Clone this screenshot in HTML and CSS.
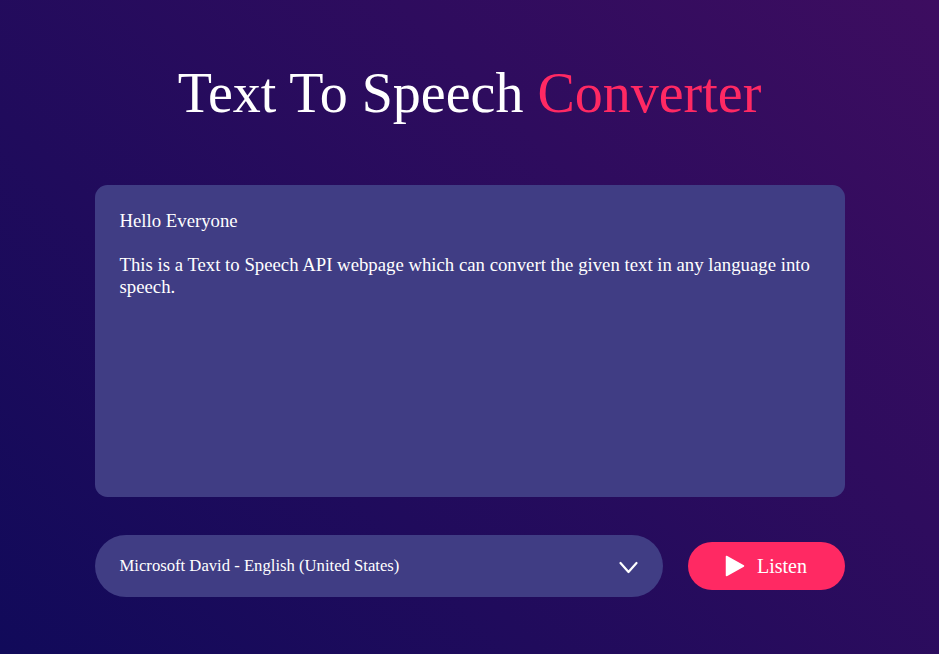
FILE: index.html
```
<!DOCTYPE html>
<html lang="en">
<head>
<meta charset="utf-8">
<title>Text To Speech Converter</title>
<link rel="stylesheet" href="styles.css">
</head>
<body>
<div class="hero">
  <h1 class="title">Text To Speech <span class="accent">Converter</span></h1>
  <textarea class="text-input">Hello Everyone

This is a Text to Speech API webpage which can convert the given text in any language into speech.</textarea>
  <div class="row">
    <div class="voice-select">
      <span class="voice-label">Microsoft David - English (United States)</span>
      <svg class="chevron" width="19" height="13" viewBox="0 0 19 13"><path d="M1.5 2 L9.5 11 L17.5 2" fill="none" stroke="#fff" stroke-width="2.2" stroke-linecap="round" stroke-linejoin="round"/></svg>
    </div>
    <button class="listen-btn">
      <svg class="play" width="20" height="22" viewBox="0 0 20 22"><path d="M1.5 1.5 L18.5 11 L1.5 20.5 Z" fill="#fff" stroke="#fff" stroke-width="1.5" stroke-linejoin="round"/></svg>
      <span>Listen</span>
    </button>
  </div>
</div>
</body>
</html>
```
FILE: styles.css
```
* { margin: 0; padding: 0; box-sizing: border-box; }
html, body { height: 100%; }
body {
  font-family: "Liberation Serif", "Times New Roman", serif;
  background: linear-gradient(45deg, #110a5a, #3d0d60);
  color: #fff;
}
.hero {
  width: 100%;
  min-height: 100vh;
  display: flex;
  flex-direction: column;
  align-items: center;
  padding-top: 61px;
}
.title {
  font-size: 56px;
  font-weight: normal;
  line-height: 64px;
  margin-bottom: 60px;
}
.accent { color: #ff2963; }
.text-input {
  display: block;
  width: 750px;
  height: 312px;
  background: #403d84;
  color: #fff;
  font-family: "Liberation Serif", "Times New Roman", serif;
  font-size: 18.75px;
  line-height: normal;
  border: 0;
  outline: 0;
  padding: 25px;
  border-radius: 12.5px;
  resize: none;
  margin-bottom: 38px;
  overflow: hidden;
}
.row {
  width: 750px;
  display: flex;
  align-items: center;
  gap: 25px;
}
.voice-select {
  flex: 1;
  height: 62px;
  background: #403d84;
  border-radius: 44px;
  display: flex;
  align-items: center;
  justify-content: space-between;
  padding: 0 25px;
  font-size: 16.67px;
}
.chevron { display: block; margin-top: 2px; }
.listen-btn {
  background: #ff2963;
  color: #fff;
  font-family: "Liberation Serif", "Times New Roman", serif;
  font-size: 20px;
  line-height: 23px;
  padding: 12.5px 37.5px;
  border-radius: 44px;
  border: 0;
  display: flex;
  align-items: center;
  gap: 12px;
}
.play { display: block; }
```
